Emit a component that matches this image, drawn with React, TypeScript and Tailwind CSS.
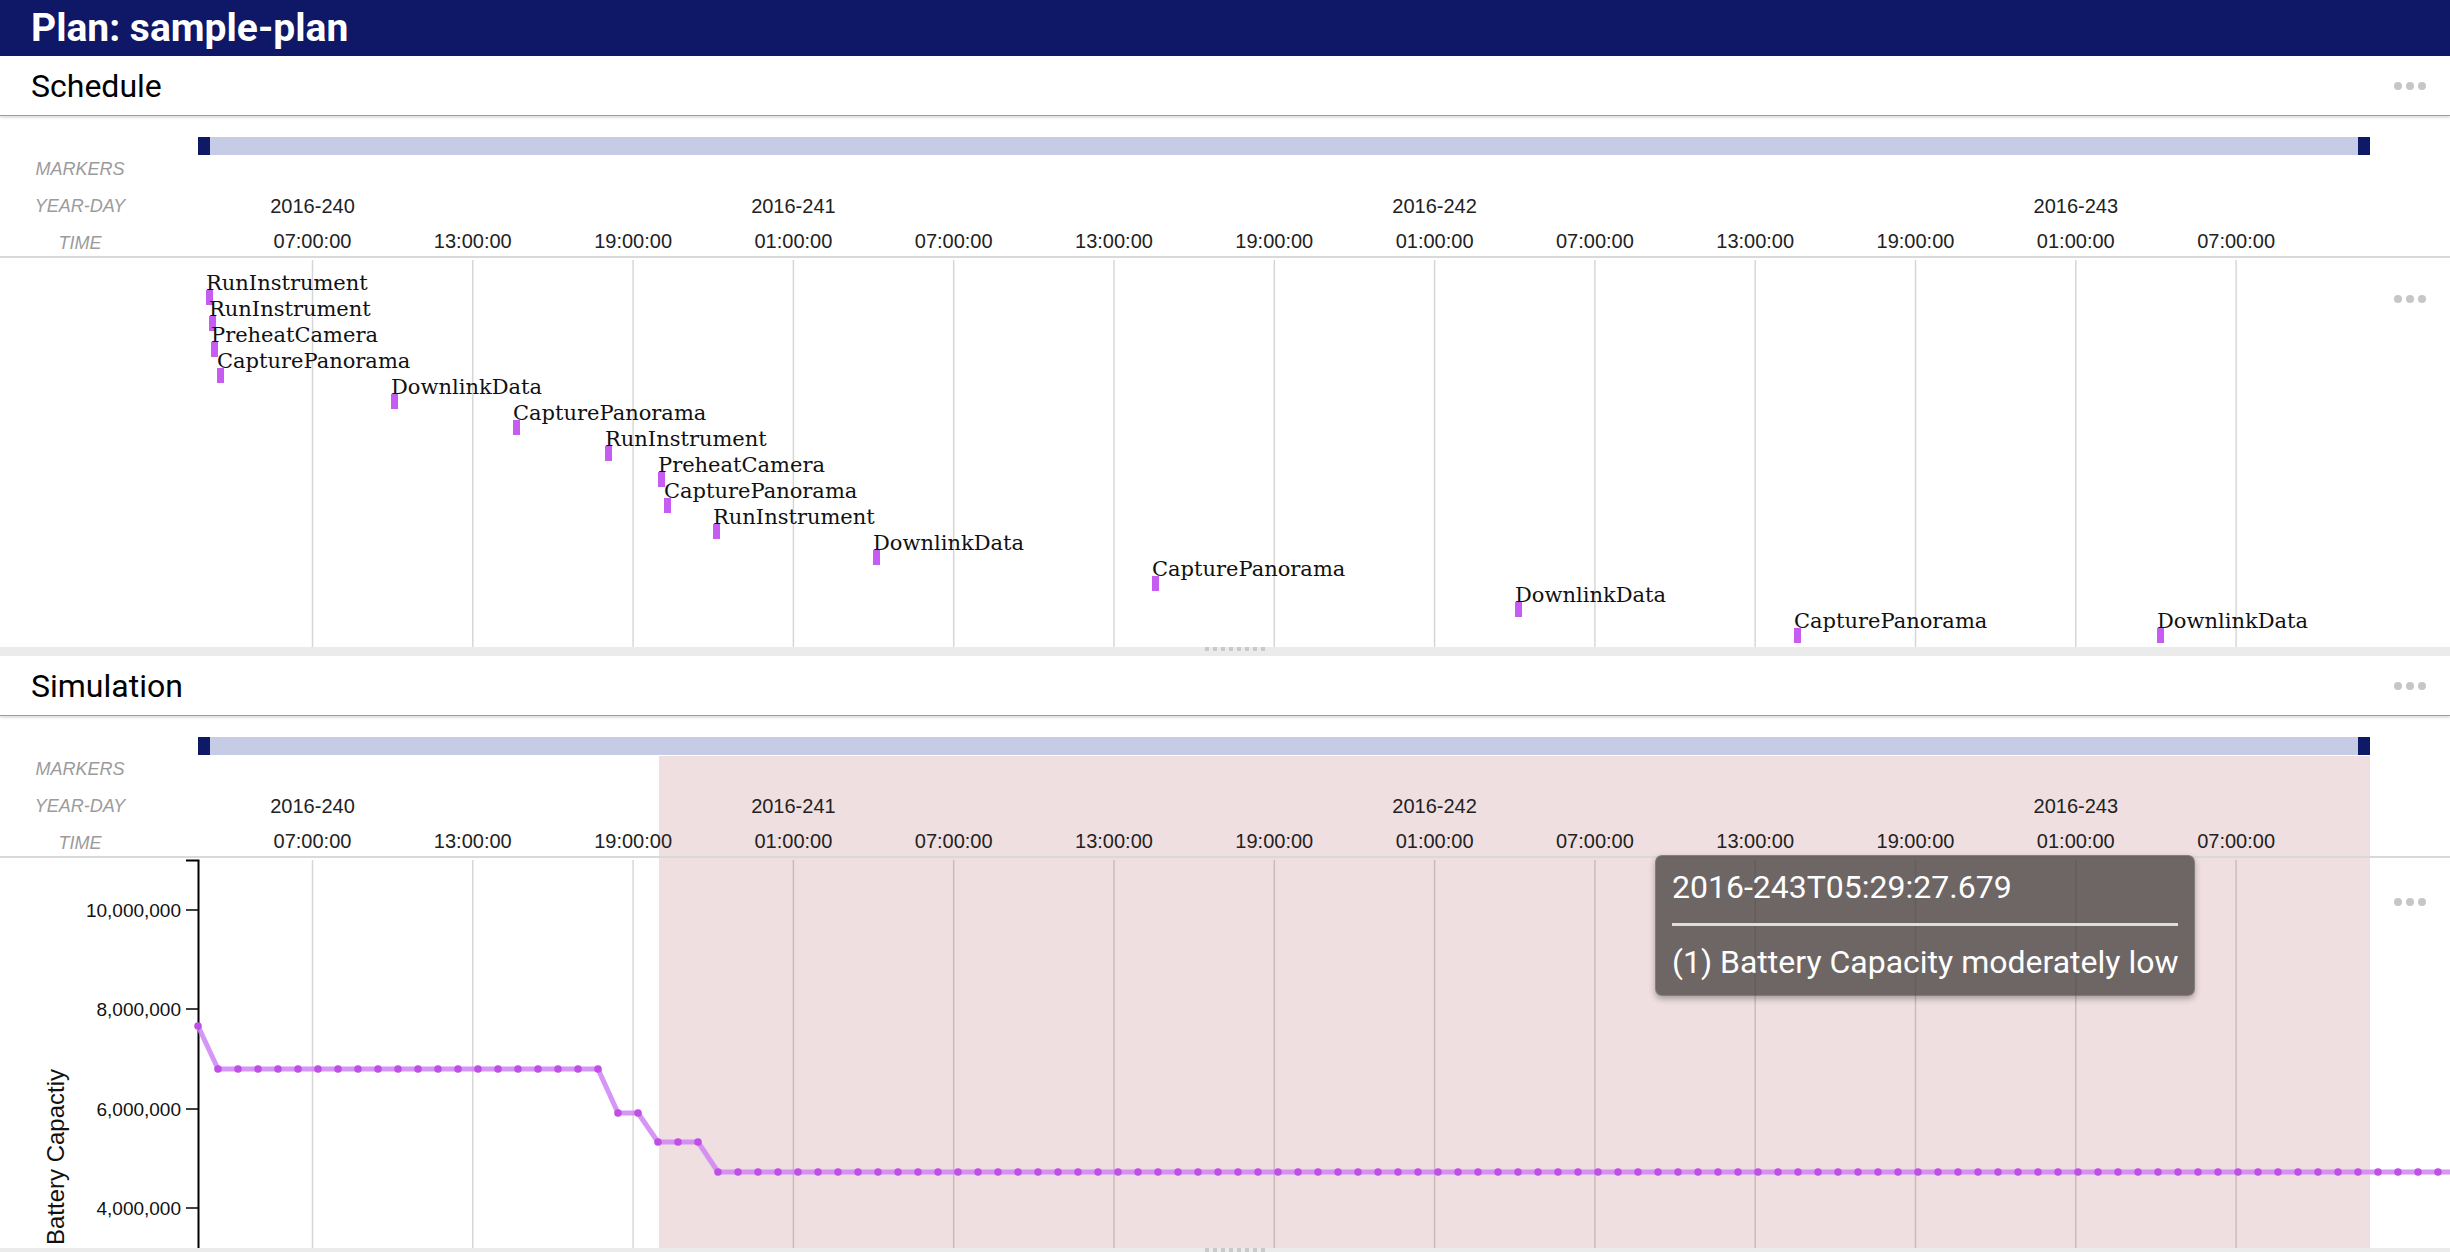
import React from "react";

// time axis: 2016-240T07:00 sits at x=312.5, 6h = 160.3px
const X0 = 312.5;
const HOUR_PX = 160.3 / 6;
const hx = (h: number) => X0 + h * HOUR_PX;

const PLOT_LEFT = 198;
const PLOT_RIGHT = 2370;
const VIOLATION_LEFT = 659;

const TIME_LABELS = [
  "07:00:00",
  "13:00:00",
  "19:00:00",
  "01:00:00",
  "07:00:00",
  "13:00:00",
  "19:00:00",
  "01:00:00",
  "07:00:00",
  "13:00:00",
  "19:00:00",
  "01:00:00",
  "07:00:00",
];

const DAY_LABELS = [
  { h: 0, label: "2016-240" },
  { h: 18, label: "2016-241" },
  { h: 42, label: "2016-242" },
  { h: 66, label: "2016-243" },
];

const ACTIVITIES: { x: number; row: number; name: string }[] = [
  { x: 206, row: 0, name: "RunInstrument" },
  { x: 209, row: 1, name: "RunInstrument" },
  { x: 211, row: 2, name: "PreheatCamera" },
  { x: 217, row: 3, name: "CapturePanorama" },
  { x: 391, row: 4, name: "DownlinkData" },
  { x: 513, row: 5, name: "CapturePanorama" },
  { x: 605, row: 6, name: "RunInstrument" },
  { x: 658, row: 7, name: "PreheatCamera" },
  { x: 664, row: 8, name: "CapturePanorama" },
  { x: 713, row: 9, name: "RunInstrument" },
  { x: 873, row: 10, name: "DownlinkData" },
  { x: 1152, row: 11, name: "CapturePanorama" },
  { x: 1515, row: 12, name: "DownlinkData" },
  { x: 1794, row: 13, name: "CapturePanorama" },
  { x: 2157, row: 13, name: "DownlinkData" },
];

// battery capacity samples, one every 20px
const BATTERY = Array.from({ length: 114 }, (_, k) => {
  const x = PLOT_LEFT + 20 * k;
  const y =
    k === 0 ? 168 : k <= 20 ? 211 : k <= 22 ? 255 : k <= 25 ? 284 : 314;
  return { x, y };
});

const Y_TICKS = [
  { y: 52, label: "10,000,000" },
  { y: 151, label: "8,000,000" },
  { y: 251, label: "6,000,000" },
  { y: 350, label: "4,000,000" },
];

function Dots() {
  return (
    <div className="flex gap-[4px]">
      <span className="w-2 h-2 rounded-full bg-[#c6c6c6]" />
      <span className="w-2 h-2 rounded-full bg-[#c6c6c6]" />
      <span className="w-2 h-2 rounded-full bg-[#c6c6c6]" />
    </div>
  );
}

function PanelHeader({ title }: { title: string }) {
  return (
    <div className="relative z-10 h-[60px] flex items-center pl-[31px] pr-[24px] bg-white border-b border-[#9c9c9c] shadow-[0_2px_2px_rgba(0,0,0,0.12)]">
      <span className="text-[32px] text-black font-['Roboto',sans-serif]">
        {title}
      </span>
      <div className="ml-auto">
        <Dots />
      </div>
    </div>
  );
}

function TimelineHeader({ violation }: { violation?: boolean }) {
  return (
    <div className="flex h-[142px] border-b-2 border-[#d9d9d9] bg-white">
      <div className="w-[198px] shrink-0 pr-[38px] pt-[35px] flex flex-col items-center italic text-[18px] text-[#9b9b9b] font-['Liberation_Sans',sans-serif]">
        <div className="h-[37px] leading-[37px]">MARKERS</div>
        <div className="h-[37px] leading-[37px]">YEAR-DAY</div>
        <div className="h-[37px] leading-[37px]">TIME</div>
      </div>
      <svg width={2252} height={140} className="shrink-0">
        <g
          transform="translate(-198,0)"
          fontFamily="'Liberation Sans', sans-serif"
          fontSize={20}
          fill="#222"
          textAnchor="middle"
        >
          {violation && (
            <rect
              x={VIOLATION_LEFT}
              y={40}
              width={PLOT_RIGHT - VIOLATION_LEFT}
              height={100}
              fill="#f0dfe0"
            />
          )}
          <rect x={PLOT_LEFT} y={21} width={PLOT_RIGHT - PLOT_LEFT} height={18} fill="#c7cce6" />
          <rect x={PLOT_LEFT} y={21} width={12} height={18} fill="#0e1a66" />
          <rect x={PLOT_RIGHT - 12} y={21} width={12} height={18} fill="#0e1a66" />
          {DAY_LABELS.map((d) => (
            <text key={d.label} x={hx(d.h)} y={97}>
              {d.label}
            </text>
          ))}
          {TIME_LABELS.map((t, i) => (
            <text key={i} x={hx(i * 6)} y={132}>
              {t}
            </text>
          ))}
        </g>
      </svg>
    </div>
  );
}

function Resizer() {
  return (
    <div className="h-[9px] bg-[#ebebeb] flex justify-center">
      <div className="flex gap-[4px] pl-[20px]">
        {Array.from({ length: 8 }).map((_, i) => (
          <span key={i} className="w-[4px] h-[4px] bg-[#c9c9c9]" />
        ))}
      </div>
    </div>
  );
}

function Gridlines({ height, top }: { height: number; top: number }) {
  return (
    <g>
      {TIME_LABELS.map((_, i) => (
        <line
          key={i}
          x1={hx(i * 6)}
          x2={hx(i * 6)}
          y1={top}
          y2={height}
          stroke="#000"
          strokeOpacity={0.16}
          strokeWidth={1.5}
        />
      ))}
    </g>
  );
}

function ScheduleContent() {
  return (
    <div className="relative h-[389px] bg-white">
      <svg width={2450} height={389} className="block">
        <Gridlines top={2} height={389} />
        <g fontFamily="'DejaVu Serif', serif" fontSize={21} fill="#111">
          {ACTIVITIES.map((a, i) => {
            const base = 32 + a.row * 26;
            return (
              <g key={i}>
                <text x={a.x} y={base}>
                  {a.name}
                </text>
                <rect x={a.x} y={base} width={7} height={15} fill="#c65cf2" />
              </g>
            );
          })}
        </g>
      </svg>
      <div className="absolute right-[24px] top-[37px]">
        <Dots />
      </div>
    </div>
  );
}

function SimulationContent() {
  const path = BATTERY.map((p, i) => `${i === 0 ? "M" : "L"}${p.x},${p.y}`).join(" ");
  return (
    <div className="relative h-[390px] bg-white">
      <svg width={2450} height={390} className="block">
        <rect
          x={VIOLATION_LEFT}
          y={0}
          width={PLOT_RIGHT - VIOLATION_LEFT}
          height={390}
          fill="#f0dfe0"
        />
        <Gridlines top={2} height={390} />
        <g fontFamily="'Liberation Sans', sans-serif" fontSize={19} fill="#111">
          <path d={`M186,2.5 H198.5 V390`} fill="none" stroke="#000" strokeWidth={2} />
          {Y_TICKS.map((t) => (
            <g key={t.label}>
              <line x1={186} x2={198} y1={t.y} y2={t.y} stroke="#000" strokeWidth={1.5} />
              <text x={181} y={t.y + 7} textAnchor="end">
                {t.label}
              </text>
            </g>
          ))}
          <text
            transform="translate(64,299) rotate(-90)"
            textAnchor="middle"
            fontSize={24}
          >
            Battery Capactiy
          </text>
        </g>
        <path
          d={path}
          fill="none"
          stroke="#cf84f5"
          strokeOpacity={0.85}
          strokeWidth={5}
          strokeLinejoin="round"
        />
        {BATTERY.map((p, i) => (
          <circle key={i} cx={p.x} cy={p.y} r={3.8} fill="#bf4fe6" />
        ))}
      </svg>
      <div className="absolute right-[24px] top-[40px]">
        <Dots />
      </div>
      <div className="absolute left-[1655px] top-[-3px] w-[540px] h-[141px] rounded-[7px] bg-[rgba(66,61,60,0.75)] border border-[rgba(255,255,255,0.15)] shadow-[0_3px_6px_rgba(0,0,0,0.3)] px-[16px] pt-[11px] text-white text-[32px] font-['Roboto',sans-serif]">
        <div className="leading-[40px] whitespace-nowrap">2016-243T05:29:27.679</div>
        <div className="mt-[16px] h-[3px] bg-[#dedede]" />
        <div className="mt-[16px] leading-[40px] whitespace-nowrap">
          (1) Battery Capacity moderately low
        </div>
      </div>
    </div>
  );
}

export default function App() {
  return (
    <div className="w-[2450px] h-[1252px] overflow-hidden bg-white">
      <div className="h-[56px] bg-[#0e1866] flex items-center pl-[31px]">
        <h1 className="text-white text-[39px] font-bold font-['Roboto',sans-serif] leading-none">
          Plan: sample-plan
        </h1>
      </div>

      <PanelHeader title="Schedule" />
      <TimelineHeader />
      <ScheduleContent />
      <Resizer />

      <PanelHeader title="Simulation" />
      <TimelineHeader violation />
      <SimulationContent />
      <Resizer />
    </div>
  );
}
